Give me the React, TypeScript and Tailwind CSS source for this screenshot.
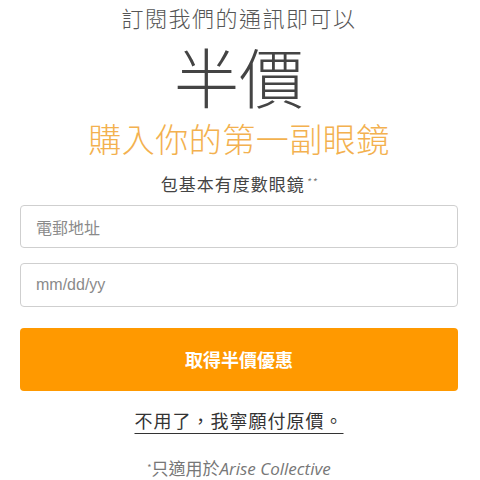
const CJK = '[font-family:"Noto_Sans_CJK_TC","Noto_Sans",sans-serif]';

export default function App() {
  return (
    <div className="w-[480px] h-[480px] bg-white overflow-hidden pl-5 pr-[22px] flex flex-col items-stretch [font-family:'Noto_Sans_CJK_TC','Noto_Sans',sans-serif]">
      <p className="shrink-0 text-center text-[22px] leading-[34px] text-[#555] font-light tracking-[1.5px]">訂閱我們的通訊即可以</p>
      <h1 className="shrink-0 text-center text-[65px] leading-[82px] text-[#444] font-light">半價</h1>
      <h2 className="shrink-0 mt-[4px] text-center text-[33px] leading-[36px] text-[#f3b14f] font-light tracking-[0.5px]">購入你的第一副眼鏡</h2>
      <p className="shrink-0 mt-[10px] h-[36px] text-center text-[17px] leading-[36px] text-[#444] tracking-[1px]">
        包基本有度數眼鏡<sup className="italic text-[10px] text-[#777] ml-[1px]">**</sup>
      </p>
      <input
        type="text"
        placeholder="電郵地址"
        className={`shrink-0 mt-[3px] h-[43px] w-full rounded-[4px] border border-[#cfcfcf] px-[15px] text-[16px] text-[#333] placeholder:text-[#8a8a8a] outline-none ${CJK}`}
      />
      <input
        type="text"
        placeholder="mm/dd/yy"
        className="shrink-0 mt-[15px] h-[44px] w-full rounded-[4px] border border-[#cfcfcf] px-[15px] text-[16px] text-[#333] placeholder:text-[#8a8a8a] outline-none [font-family:'Liberation_Sans',Arial,sans-serif]"
      />
      <button className="shrink-0 mt-[21px] h-[63px] w-full rounded-[4px] bg-[#ff9900] text-white text-[18px] font-bold">
        取得半價優惠
      </button>
      <a className="shrink-0 mt-[14px] self-center text-[18px] leading-[30px] text-[#333] underline underline-offset-[5px] decoration-[1px] tracking-[1px]">
        不用了，我寧願付原價。
      </a>
      <p className="shrink-0 mt-[18px] self-center text-[17px] leading-[30px] text-[#777]">
        <sup className="text-[9px]">*</sup>只適用於<span className="italic [font-family:'Open_Sans',sans-serif]">Arise Collective</span>
      </p>
    </div>
  );
}
